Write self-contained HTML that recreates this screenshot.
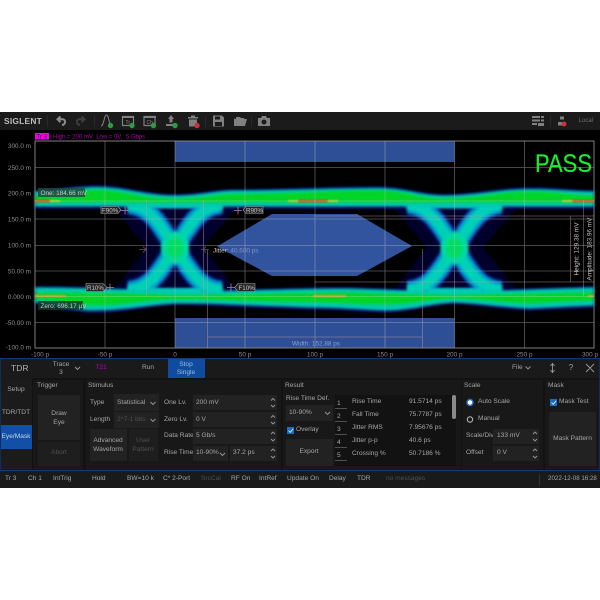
<!DOCTYPE html>
<html><head><meta charset="utf-8"><title>TDR</title>
<style>
html,body{margin:0;padding:0;background:#fff}
#p{position:relative;width:600px;height:600px;overflow:hidden;background:#fff;font-family:"Liberation Sans",sans-serif;font-size:6.6px;color:#a6a6a6;filter:blur(.3px)}
.a,.t{position:absolute}
.t{white-space:nowrap;line-height:8px}
.c{transform:translateX(-50%);text-align:center}
.b{position:absolute;background:#222}
.d{color:#505050}
svg{position:absolute;left:0;top:0}
svg text{font-family:"Liberation Sans",sans-serif}
</style></head><body><div id="p">

<div class="a" style="left:0;top:112px;width:600px;height:18px;background:#1b1b1b"></div>
<div class="a" style="left:0;top:130px;width:600px;height:228px;background:#000"></div>
<div class="t" style="left:4px;top:117px;font-size:8.4px;font-weight:bold;color:#bcbcbc;line-height:9px;letter-spacing:.25px">SIGLENT</div>

<svg width="600" height="600" viewBox="0 0 600 600">
<defs>
<filter id="b1" x="-5%" y="-20%" width="110%" height="140%"><feGaussianBlur stdDeviation="1.4"/></filter>
<filter id="b2" x="-5%" y="-20%" width="110%" height="140%"><feGaussianBlur stdDeviation=".8"/></filter>
<g id="xa" fill="none">
<path d="M128 205C152 206 161 228 175 248C189 268 198 289 222 290"/>
<path d="M128 290C152 289 161 268 175 248C189 228 198 206 222 205"/>
<path d="M148 206H202M148 290H202" stroke-width="3"/>
</g>
</defs>

<!-- toolbar icons -->
<g fill="none" stroke="#808080" stroke-width="2">
<path d="M60.500 116.500l-3 2.800 3 2.800M58 119.300h4.500c3.500 0 3.500 5.200-.5 5.700" stroke="#8c8c8c"/>
<path d="M81.500 116.500l3 2.800-3 2.800M84 119.300h-4.500c-3.500 0-3.500 5.200.5 5.700" stroke="#3f3f3f"/>
<path d="M101 126C104 126 104 115 106.500 115C109 115 109 126 112 126" stroke-width="1"/>
<rect x="122.500" y="116.500" width="11" height="9" stroke-width="1.200"/>
<rect x="144" y="116.500" width="11" height="9" stroke-width="1.200"/>
</g>
<rect x="122" y="116" width="12" height="2" fill="#808080"/><rect x="144" y="116" width="12" height="2" fill="#808080"/>
<text x="125.500" y="124" font-size="5" fill="#8c8c8c">Tr</text><text x="146.500" y="124" font-size="5" fill="#8c8c8c">Ch</text>
<g fill="#808080">
<path d="M171 115l3 4h-1.500v3.500h-3v-3.500h-1.500zM166 124h10v2h-10z"/>
<path d="M188 117h10v1.500h-10zM191 115.500h4v1.500h-4zM189 119.500h8v7h-8z"/>
<path d="M213 115.500h9l2 2v9h-11zM215 116.500v3h5v-3zM215 122v4h7v-4z" fill-rule="evenodd"/>
<path d="M234 119h2v-2h4l1 1h3v1h3l-2 7h-11zM235 118v1h-1z"/>
<path d="M258 118h3l1-2h4l1 2h3v8h-12zM264 119.500a2.500 2.500 0 1 0 .01 0z" fill-rule="evenodd"/>
<path d="M532 116h8v2h-8zM532 119.500h8v2h-8zM532 123h5v2h-5zM541 116h3v2h-3zM541 119.500h3v2h-3zM538 123h6v3h-6z"/>
<path d="M560 116.500h4v3h-4zM558 122h4v3.500h-4z"/>
</g>
<circle cx="110.500" cy="125.500" r="2.700" fill="#2f9a46"/><circle cx="132" cy="125.500" r="2.700" fill="#2f9a46"/><circle cx="153.500" cy="125.500" r="2.700" fill="#2f9a46"/><circle cx="175" cy="125.500" r="2.700" fill="#2f9a46"/><circle cx="197" cy="125.500" r="2.700" fill="#c8333c"/><circle cx="564" cy="124" r="2.500" fill="#c8333c"/>
<path d="M47.500 116v11M94.500 116v11M205.500 116v11M251.500 116v11M550.500 116v11" stroke="#2e2e2e" stroke-width=".8"/>

<!-- header -->
<rect x="35" y="133" width="14" height="6.500" fill="#f000f0"/>
<text x="36.500" y="138.700" font-size="6" fill="#300030">Tr 3</text>
<text x="53" y="138.700" font-size="6" fill="#a800a8">High = 200 mV&#160; Low = 0V,&#160; 5 Gbps</text>

<!-- masks -->
<rect x="175" y="141" width="279.500" height="21" fill="#2e4f96"/>
<rect x="175" y="318" width="279.500" height="30" fill="#2e4f96"/>
<path d="M217 246.500L272 214H357L412 246L357 276H272Z" fill="#3558a6" opacity=".95"/>

<!-- halos -->
<g fill="#00022c" filter="url(#b2)">
<path d="M113 208L147 247L113 291H237L203 247L237 208Z"/>
<path d="M393 208L427 247L393 291H517L483 247L517 208Z"/>
</g>

<!-- eye -->
<g filter="url(#b1)">
<path d="M35 190C60 189 78 185 97 185C125 185 145 194 175 194C200 194 215 189 235 189C280 189 330 186 377 186C405 186 420 194 445 194C475 194 500 187 530 187C555 187 575 190 594 190V209H35Z" fill="#000e68"/>
<path d="M35 286C80 286 130 288 175 290C230 290 300 287 345 287C390 288 420 290 454 290C490 290 550 287 594 286V308C570 309 550 310 530 311C505 310 480 305 454 304C430 305 410 313 385 313C360 312 335 310 315 310C285 309 255 308 230 307C210 306 195 305 175 305C150 306 125 313 95 313C70 313 50 306 35 305Z" fill="#000e68"/>
<g stroke="#001e90" stroke-width="21"><use href="#xa"/><use href="#xa" x="279.500"/></g>
<g stroke="#009cd0" stroke-width="16"><use href="#xa"/><use href="#xa" x="279.500"/></g>
</g>
<g filter="url(#b1)">
<g stroke="#00d0b8" stroke-width="10"><use href="#xa"/><use href="#xa" x="279.500"/></g>
<path d="M35 191.500C60 190.500 78 187 97 187C125 187 145 195.500 175 195.500C200 195.500 215 190.500 235 190.500C280 190.500 330 188 377 188C405 188 420 195.500 445 195.500C475 195.500 500 189 530 189C555 189 575 191.500 594 191.500V206.500H35Z" fill="#00c8b0"/>
<path d="M35 287.500C80 287.500 130 289.500 175 291.500C230 291.500 300 288.500 345 288.500C390 289.500 420 291.500 454 291.500C490 291.500 550 288.500 594 287.500V305.500C570 306.500 550 307.500 530 308.500C505 307.500 480 303.500 454 302.500C430 303.500 410 310.500 385 310.500C360 309.500 335 307.500 315 307.500C285 306.500 255 305.500 230 304.500C210 303.500 195 303.500 175 303.500C150 304.500 125 310.500 95 310.500C70 310.500 50 303.500 35 302.500Z" fill="#00c8b0"/>
<ellipse cx="175" cy="248" rx="14" ry="16" fill="#00d8a0"/><ellipse cx="454.500" cy="248" rx="14" ry="16" fill="#00d8a0"/>
<path d="M35 195C60 194 78 189.500 97 189.500C125 190 140 198 175 198C205 198 215 193.500 235 193.500C280 193.500 330 190 377 190C405 190 420 198 445 198C475 198 500 191 530 191C555 191 575 195 594 195V203H35Z" fill="#00d426"/>
<path d="M35 292C80 292 130 293 175 294.500C230 294.500 300 292 345 292C390 293 420 294.500 454 294.500C490 294.500 550 292 594 292V301C570 302 550 303 530 304C505 303 480 300 454 299C430 300 410 305 385 305C360 305 335 303 315 303C285 302 255 302 230 301C210 300 195 300 175 300C150 300 125 306 95 306C70 306 50 300 35 300Z" fill="#00d426"/>
<ellipse cx="175" cy="248" rx="8" ry="10" fill="#00dc60"/><ellipse cx="454.500" cy="248" rx="8" ry="10" fill="#00dc60"/>
</g>
<g filter="url(#b2)">
<path d="M35 201H50M298 201H328M572 201H594" stroke="#e0481c" stroke-width="2.500"/>
<path d="M50 201H60M288 201H298M328 201H338M562 201H572" stroke="#b8c820" stroke-width="2"/>
<path d="M35 296H66M313 296H346M588 296H594" stroke="#e09820" stroke-width="2"/>
</g>

<!-- grid -->
<g stroke="#b8b8b8" stroke-width=".8" opacity=".5">
<path d="M105 141V348M175 141V348M245 141V348M315 141V348M385 141V348M454.500 141V348M524.500 141V348"/>
<path d="M35 167.500H594M35 219H594M35 245.500H594M35 271H594M35 322.500H594"/>
</g>
<rect x="35" y="141" width="559" height="207" fill="none" stroke="#8c8c8c" stroke-width=".9"/>

<!-- measurement lines -->
<g stroke="#c89aa0" stroke-width=".8" fill="none" opacity=".55">
<path d="M146.500 200V296M203.500 200V296M207.500 250V348M422.500 249V348M207.500 337H422.500"/>
<path d="M315 216H594M315 282H594M570.500 216V282"/>
<path d="M139 249.500H147M143 246.500l3 3-3 3M201 249.500H209M206 246.500l-3 3 3 3"/>
</g>
<g stroke="#d0d0d0" stroke-width=".8" fill="none" opacity=".4"><path d="M35 201H594M35 296.500H594M583.500 200V296"/></g>
<g stroke="#d08a9a" stroke-width=".8" fill="none" opacity=".9">
<path d="M121 210.500h8M125 206.500v8M234 210.500h8M238 206.500v8M106 287.500h8M110 283.500v8M227 287.500h8M231 283.500v8"/>
</g>

<!-- labels -->
<g fill="#262626" stroke="#a0a0a0" stroke-width=".6">
<path d="M101 206.500H118L121 210L118 213.500H101Z"/>
<path d="M246 206.500H263V213.500H246L243 210Z"/>
<path d="M86 283.500H103L107 287.500L103 291.500H86Z"/>
<path d="M238 283.500H255V291.500H238L234.500 287.500Z"/>
</g>
<g font-size="6.200" fill="#c8c8c8">
<text x="102" y="212.400">F90%</text><text x="246" y="212.400">R90%</text><text x="87" y="289.800">R10%</text><text x="238.500" y="289.800">F10%</text>
</g>
<rect x="38" y="188" width="47" height="9" fill="#1d4a3c" opacity=".85"/>
<rect x="38" y="301" width="45" height="9" fill="#103a2c" opacity=".85"/>
<g font-size="6.400" fill="#c8c8c8">
<text x="40.500" y="194.900">One: 184.66 mV</text>
<text x="40.500" y="308.200">Zero: 696.17 µV</text>
<text x="213" y="252.400">Jitter: <tspan fill="#7d93c8">40.600 ps</tspan></text>
<text x="292" y="345.300" fill="#8ba0d0">Width: 152.88 ps</text>
<text transform="translate(578.500 249) rotate(-90)" text-anchor="middle">Height: 129.38 mV</text>
<text transform="translate(591.500 249) rotate(-90)" text-anchor="middle">Amplitude: 183.96 mV</text>
</g>
<text x="535" y="172" font-size="25" fill="#1cee2c" stroke="#1cee2c" stroke-width=".2" textLength="57" lengthAdjust="spacingAndGlyphs">PASS</text>

<!-- axis -->
<g font-size="6.400" fill="#8c8c8c" text-anchor="end">
<text x="31" y="148">300.0 m</text><text x="31" y="169.800">250.0 m</text><text x="31" y="195.500">200.0 m</text><text x="31" y="221.500">150.0 m</text><text x="31" y="247.500">100.0 m</text><text x="31" y="273.500">50.00 m</text><text x="31" y="299">0.000 m</text><text x="31" y="325">-50.00 m</text><text x="31" y="349.500">-100.0 m</text>
</g>
<g font-size="6.400" fill="#8c8c8c" text-anchor="middle">
<text x="40" y="356.500">-100 p</text><text x="105" y="356.500">-50 p</text><text x="175" y="356.500">0</text><text x="245" y="356.500">50 p</text><text x="315" y="356.500">100 p</text><text x="385" y="356.500">150 p</text><text x="454.500" y="356.500">200 p</text><text x="524.500" y="356.500">250 p</text><text x="590" y="356.500">300 p</text>
</g>
</svg>
<div class="t" style="right:7px;top:117px;color:#707070;font-size:6px">Local</div>

<!-- panel -->
<div class="a" style="left:0;top:358px;width:600px;height:112px;background:#121212"></div>
<div class="a" style="left:0;top:358px;width:600px;height:1.500px;background:#123a78"></div>
<div class="a" style="left:0;top:359px;width:1px;height:111px;background:#102c5c"></div>
<div class="a" style="left:599px;top:359px;width:1px;height:111px;background:#102c5c"></div>
<div class="a" style="left:1px;top:359px;width:598px;height:19px;background:#1a1a1a"></div>
<div class="a" style="left:168px;top:359px;width:37px;height:19px;background:#0f4c9f"></div>
<div class="a" style="left:1px;top:378px;width:31px;height:92px;background:#1b1b1b"></div>
<div class="a" style="left:1px;top:425px;width:31px;height:24px;background:#1150a6"></div>

<div class="t" style="left:11px;top:363px;font-size:8.500px;line-height:10px;color:#b0b0b0">TDR</div>
<div class="t c" style="left:61px;top:360.500px;line-height:8.500px">Trace<br>3</div>
<div class="t c" style="left:101px;top:364px;color:#b800b8">T21</div>
<div class="t c" style="left:148px;top:364px">Run</div>
<div class="t c" style="left:186px;top:360.500px;line-height:8.500px;color:#9fb8dc">Stop<br>Single</div>
<div class="t" style="left:512px;top:364px">File</div>
<div class="t c" style="left:571px;top:364px;font-size:8px">?</div>

<div class="t c" style="left:16px;top:386px">Setup</div>
<div class="t c" style="left:16px;top:409px">TDR/TDT</div>
<div class="t c" style="left:16px;top:433px;color:#c8d2e2">Eye/Mask</div>

<!-- groups -->
<div class="b" style="left:33px;top:380px;width:50px;height:90px;background:#181818"></div>
<div class="b" style="left:86px;top:380px;width:195px;height:90px;background:#181818"></div>
<div class="b" style="left:283px;top:380px;width:178px;height:90px;background:#181818"></div>
<div class="b" style="left:462px;top:380px;width:81px;height:90px;background:#181818"></div>
<div class="b" style="left:545px;top:380px;width:54px;height:90px;background:#181818"></div>
<div class="t" style="left:37px;top:382px">Trigger</div>
<div class="t" style="left:88px;top:382px">Stimulus</div>
<div class="t" style="left:285px;top:382px">Result</div>
<div class="t" style="left:464px;top:382px">Scale</div>
<div class="t" style="left:548px;top:382px">Mask</div>

<div class="b" style="left:38px;top:395px;width:42px;height:45px"></div>
<div class="t c" style="left:59px;top:409px;line-height:9px">Draw<br>Eye</div>
<div class="b" style="left:38px;top:442px;width:42px;height:24px;background:#1e1e1e"></div>
<div class="t c d" style="left:59px;top:449px">Abort</div>

<div class="t" style="left:90px;top:399px">Type</div>
<div class="b" style="left:114px;top:394px;width:45px;height:17px"></div>
<div class="t" style="left:117px;top:399px">Statistical</div>
<div class="t" style="left:90px;top:416px">Length</div>
<div class="b" style="left:114px;top:412px;width:45px;height:16px"></div>
<div class="t d" style="left:117px;top:416px">2^7-1 bits</div>
<div class="b" style="left:90px;top:429px;width:37px;height:32px"></div>
<div class="t c" style="left:108px;top:436px;line-height:9px">Advanced<br>Waveform</div>
<div class="b" style="left:129px;top:429px;width:29px;height:32px;background:#1e1e1e"></div>
<div class="t c d" style="left:143px;top:436px;line-height:9px">User<br>Pattern</div>

<div class="t" style="left:164px;top:399px">One Lv.</div>
<div class="b" style="left:193px;top:395px;width:84px;height:15px"></div>
<div class="t" style="left:196px;top:399px">200 mV</div>
<div class="t" style="left:164px;top:416px">Zero Lv.</div>
<div class="b" style="left:193px;top:412px;width:84px;height:15px"></div>
<div class="t" style="left:196px;top:416px">0 V</div>
<div class="t" style="left:164px;top:432px">Data Rate</div>
<div class="b" style="left:193px;top:429px;width:84px;height:15px"></div>
<div class="t" style="left:196px;top:432px">5 Gb/s</div>
<div class="t" style="left:164px;top:449px">Rise Time</div>
<div class="b" style="left:193px;top:446px;width:35px;height:15px"></div>
<div class="t" style="left:196px;top:449px">10-90%</div>
<div class="b" style="left:230px;top:446px;width:47px;height:15px"></div>
<div class="t" style="left:233px;top:449px">37.2 ps</div>

<div class="t" style="left:286px;top:395px">Rise Time Def.</div>
<div class="b" style="left:286px;top:405px;width:47px;height:16px"></div>
<div class="t" style="left:289px;top:409px">10-90%</div>
<div class="t" style="left:296px;top:426px">Overlay</div>
<div class="b" style="left:286px;top:439px;width:47px;height:27px"></div>
<div class="t c" style="left:309px;top:448px">Export</div>

<div class="a" style="left:335px;top:395px;width:121px;height:71px;background:#121212"></div>
<div class="t" style="left:337px;top:400px">1</div><div class="t" style="left:352px;top:398px">Rise Time</div><div class="t" style="left:409px;top:398px">91.5714 ps</div>
<div class="t" style="left:337px;top:413px">2</div><div class="t" style="left:352px;top:411px">Fall Time</div><div class="t" style="left:409px;top:411px">75.7787 ps</div>
<div class="t" style="left:337px;top:426px">3</div><div class="t" style="left:352px;top:424px">Jitter RMS</div><div class="t" style="left:409px;top:424px">7.95676 ps</div>
<div class="t" style="left:337px;top:439px">4</div><div class="t" style="left:352px;top:437px">Jitter p-p</div><div class="t" style="left:409px;top:437px">40.6 ps</div>
<div class="t" style="left:337px;top:452px">5</div><div class="t" style="left:352px;top:450px">Crossing %</div><div class="t" style="left:409px;top:450px">50.7186 %</div>
<div class="a" style="left:452px;top:395px;width:4px;height:24px;background:#8a8a8a;border-radius:2px"></div>

<div class="t" style="left:478px;top:398px">Auto Scale</div>
<div class="t" style="left:478px;top:415px">Manual</div>
<div class="t" style="left:466px;top:432px">Scale/Div</div>
<div class="b" style="left:493px;top:429px;width:46px;height:15px"></div>
<div class="t" style="left:497px;top:432px">133 mV</div>
<div class="t" style="left:466px;top:449px">Offset</div>
<div class="b" style="left:493px;top:446px;width:46px;height:15px"></div>
<div class="t" style="left:497px;top:449px">0 V</div>

<div class="t" style="left:559px;top:398px">Mask Test</div>
<div class="b" style="left:549px;top:412px;width:47px;height:54px"></div>
<div class="t c" style="left:572.500px;top:435px">Mask Pattern</div>

<!-- status -->
<div class="a" style="left:0;top:470px;width:600px;height:18px;background:#1a1a1a;border-top:1px solid #123a78;box-sizing:border-box"></div>
<div class="t" style="left:5px;top:475px">Tr 3</div>
<div class="t" style="left:28px;top:475px">Ch 1</div>
<div class="t" style="left:53px;top:475px">IntTrig</div>
<div class="t" style="left:92px;top:475px">Hold</div>
<div class="t" style="left:127px;top:475px">BW=10 k</div>
<div class="t" style="left:163px;top:475px">C* 2-Port</div>
<div class="t d" style="left:201px;top:475px">SrcCal</div>
<div class="t" style="left:231px;top:475px">RF On</div>
<div class="t" style="left:259px;top:475px">IntRef</div>
<div class="t" style="left:287px;top:475px">Update On</div>
<div class="t" style="left:329px;top:475px">Delay</div>
<div class="t" style="left:357px;top:475px">TDR</div>
<div class="t d" style="left:386px;top:475px">no messages</div>
<div class="t" style="left:548px;top:475px;font-size:6.200px">2022-12-08 16:28</div>

<!-- overlay controls -->
<svg width="600" height="600" viewBox="0 0 600 600">
<g fill="none" stroke="#9a9a9a" stroke-width=".9">
<path d="M75 367l2.500 2.500 2.500-2.500M525.500 366.500l2.500 2.500 2.500-2.500M586 364l8 8M594 364l-8 8M552.500 364v8M550.500 366l2-2.500 2 2.500M550.500 370l2 2.500 2-2.500"/>
<path d="M150.500 402l2.500 2.500 2.500-2.500M150.500 419l2.500 2.500 2.500-2.500"/>
<path d="M271 400.500l2-2 2 2M271 405l2 2 2-2M271 417.500l2-2 2 2M271 422l2 2 2-2M271 434l2-2 2 2M271 439l2 2 2-2M271 451l2-2 2 2M271 456l2 2 2-2"/>
<path d="M220 453l2.500 2.500 2.500-2.500M325 412l2.500 2.500 2.500-2.500"/>
<path d="M533 434l2-2 2 2M533 439l2 2 2-2M533 451l2-2 2 2M533 456l2 2 2-2"/>
</g>
<rect x="287" y="427" width="7" height="7" fill="#1a6cc0"/>
<rect x="550" y="399" width="7" height="7" fill="#1a6cc0"/>
<path d="M288.500 430.500l1.700 1.800 3-3.500M551.500 402.500l1.700 1.800 3-3.500" fill="none" stroke="#dbe8f5" stroke-width=".9"/>
<circle cx="470" cy="402.500" r="3" fill="#fff" stroke="#2a70c8" stroke-width="1.500"/>
<circle cx="470" cy="419.500" r="2.700" fill="none" stroke="#bbb" stroke-width="1"/>
<path d="M335 408.500h12M335 421.500h12M335 434.500h12M335 447.500h12M335 460.500h12" stroke="#666" stroke-width=".7"/>
<path d="M539.500 474v12" stroke="#3a3a3a" stroke-width=".8"/>
</svg>
</div></body></html>
